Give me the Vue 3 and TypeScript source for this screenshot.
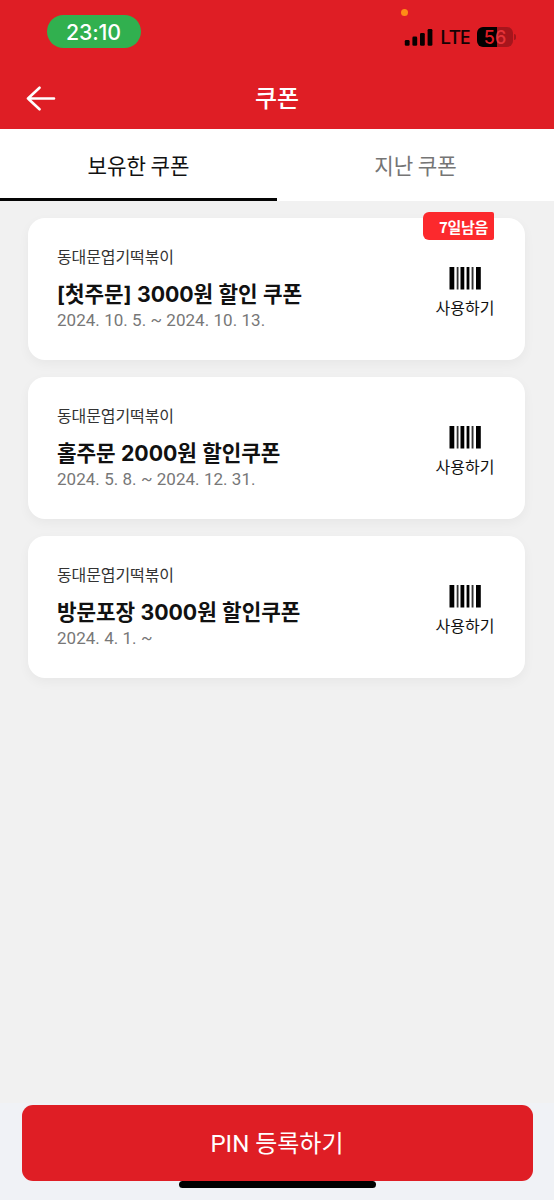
<script setup lang="ts">
interface Coupon {
  id: number
  brand: string
  title: string
  period: string
  badge?: string
}

const coupons: Coupon[] = [
  { id: 1, brand: '동대문엽기떡볶이', title: '[첫주문] 3000원 할인 쿠폰', period: '2024. 10. 5. ~ 2024. 10. 13.', badge: '7일남음' },
  { id: 2, brand: '동대문엽기떡볶이', title: '홀주문 2000원 할인쿠폰', period: '2024. 5. 8. ~ 2024. 12. 31.' },
  { id: 3, brand: '동대문엽기떡볶이', title: '방문포장 3000원 할인쿠폰', period: '2024. 4. 1. ~' },
]
</script>

<template>
  <div class="screen">
    <header class="header">
      <div class="status">
        <span class="clock">23:10</span>
        <div class="indicators">
          <i class="mic-dot"></i>
          <svg class="signal" width="29" height="18" viewBox="0 0 29 18">
            <rect x="0.8" y="12" width="4.8" height="5.8" rx="1.3" />
            <rect x="8.4" y="8.6" width="4.8" height="9.2" rx="1.3" />
            <rect x="16" y="4.9" width="4.8" height="12.9" rx="1.3" />
            <rect x="23.6" y="1" width="4.8" height="16.8" rx="1.3" />
          </svg>
          <span class="network">LTE</span>
          <span class="battery"><span>5</span><span class="dim">6</span></span>
          <i class="battery-tip"></i>
        </div>
      </div>
      <div class="nav">
        <svg class="back" width="30" height="26" viewBox="0 0 30 26">
          <path d="M28 13.5H2M13.5 2.7 2 13.5l11.5 10.8" />
        </svg>
        <h1>쿠폰</h1>
      </div>
    </header>

    <nav class="tabs">
      <button class="tab active">보유한 쿠폰</button>
      <button class="tab">지난 쿠폰</button>
    </nav>

    <main class="list">
      <article v-for="c in coupons" :key="c.id" class="card">
        <span v-if="c.badge" class="badge">{{ c.badge }}</span>
        <div class="info">
          <p class="brand">{{ c.brand }}</p>
          <h2>{{ c.title }}</h2>
          <p class="period">{{ c.period }}</p>
        </div>
        <button class="use">
          <svg width="32" height="23" viewBox="0 0 32 23">
            <path d="M.5 0h4.8v22.5H.5zM11.5 0h3.8v22.5h-3.8zM17.6 0h2.8v22.5h-2.8zM27 0h4.8v22.5H27z" />
            <path class="thin" d="M7.7 0h1.8v22.5H7.7zM22.6 0h1.9v22.5h-1.9z" />
          </svg>
          <span>사용하기</span>
        </button>
      </article>
    </main>

    <footer class="footer">
      <button class="register">PIN 등록하기</button>
      <i class="home"></i>
    </footer>
  </div>
</template>

<style>
body {
  margin: 0;
}
</style>

<style scoped>
.screen {
  display: flex;
  flex-direction: column;
  width: 554px;
  height: 1200px;
  overflow: hidden;
  background: #f1f1f1;
  font-family: Roboto, "Noto Sans CJK KR", sans-serif;
  color: #111;
}
h1, h2, p {
  margin: 0;
}
button {
  padding: 0;
  border: 0;
  background: none;
  font: inherit;
  color: inherit;
}
svg {
  display: block;
}
.header {
  height: 129px;
  flex: none;
  background: #df1e25;
}
.status {
  display: flex;
  justify-content: space-between;
  height: 67px;
}
.clock {
  width: 93px;
  height: 33px;
  padding-right: 1px;
  margin: 15px 0 0 47px;
  border-radius: 17px;
  background: #31b04f;
  color: #fff;
  font: 500 21.3px/35px Inter, sans-serif;
  letter-spacing: -0.1px;
  text-align: center;
}
.indicators {
  position: relative;
  display: flex;
  align-items: center;
  height: 20px;
  margin: 27px 38px 0 0;
}
.mic-dot {
  position: absolute;
  left: -3px;
  top: -18px;
  width: 7px;
  height: 7px;
  border-radius: 50%;
  background: #ff8c16;
}
.signal {
  fill: #080000;
}
.network {
  margin-left: 7px;
  width: 29px;
  font: 500 20px/22px "Noto Sans", sans-serif;
  letter-spacing: -1px;
  color: #160204;
}
.battery {
  box-sizing: border-box;
  display: flex;
  justify-content: center;
  width: 36px;
  height: 20px;
  margin-left: 8px;
  border-radius: 6px;
  background: linear-gradient(90deg, #050000 20px, #a6151c 20px);
  font: 500 18px/21px Inter, sans-serif;
  color: #df1e25;
}
.battery .dim {
  color: #e5343a;
}
.battery-tip {
  width: 2px;
  height: 6px;
  margin-left: 1px;
  border-radius: 0 2px 2px 0;
  background: #a6151c;
}
.nav {
  display: grid;
  grid-template-columns: 60px 1fr 60px;
  align-items: center;
  height: 62px;
}
.back {
  margin-left: 26px;
  fill: none;
  stroke: #fff;
  stroke-width: 2.6;
  stroke-linecap: round;
  stroke-linejoin: round;
}
h1 {
  padding-bottom: 2px;
  font: 500 24px/60px "Noto Sans CJK KR", sans-serif;
  text-align: center;
  color: #fff;
}
.tabs {
  display: flex;
  flex: none;
  height: 71.5px;
  background: #fff;
}
.tab {
  box-sizing: border-box;
  flex: 1;
  height: 71.5px;
  border-bottom: 3px solid transparent;
  font: 400 21.2px/72px "Noto Sans CJK KR", sans-serif;
  color: #757575;
}
.tab.active {
  border-bottom-color: #050505;
  color: #111;
}
.list {
  display: flex;
  flex: 1;
  flex-direction: column;
  gap: 17.2px;
  padding: 17.2px 29px 0 28.3px;
}
.card {
  position: relative;
  box-sizing: border-box;
  display: flex;
  justify-content: space-between;
  height: 142px;
  padding: 25px 29px 0 28.7px;
  border-radius: 17px;
  background: #fff;
  box-shadow: 0 4px 12px rgba(0, 0, 0, 0.045);
}
.badge {
  position: absolute;
  right: 31px;
  top: -6px;
  box-sizing: border-box;
  width: 71px;
  height: 28px;
  padding-left: 16px;
  border-radius: 6px 2px 2px 6px;
  background: #fc292d;
  color: #fff;
  font: 700 15px/30px "Noto Sans CJK KR", sans-serif;
  letter-spacing: -0.3px;
  white-space: nowrap;
}
.brand {
  font: 400 16px/26px "Noto Sans CJK KR", sans-serif;
  letter-spacing: -0.1px;
  color: #333;
}
h2 {
  margin-top: 8px;
  font: 700 21.3px/34px Inter, "Noto Sans CJK KR", sans-serif;
  letter-spacing: -0.05px;
  word-spacing: 0.4px;
  white-space: nowrap;
}
.period {
  margin-top: -1px;
  font: 400 17px/20px Roboto, sans-serif;
  letter-spacing: 0.04px;
  color: #777;
}
.use {
  display: flex;
  flex-direction: column;
  align-items: center;
  width: 62px;
  padding-top: 24px;
}
.use span {
  margin-top: 4px;
  font: 400 16px/26px "Noto Sans CJK KR", sans-serif;
  white-space: nowrap;
}
.thin {
  fill: #333;
}
.footer {
  display: flex;
  flex: none;
  flex-direction: column;
  align-items: center;
  height: 97px;
  background: #f0f2f6;
}
.register {
  width: 511px;
  height: 76.5px;
  margin: 1.5px 0 0;
  padding: 1px 0 0;
  border-radius: 11px;
  background: #df1e25;
  color: #fff;
  font: 400 24px/76px Roboto, "Noto Sans CJK KR", sans-serif;
}
.home {
  width: 197px;
  height: 7px;
  border-radius: 4px;
  background: #000;
}
</style>
